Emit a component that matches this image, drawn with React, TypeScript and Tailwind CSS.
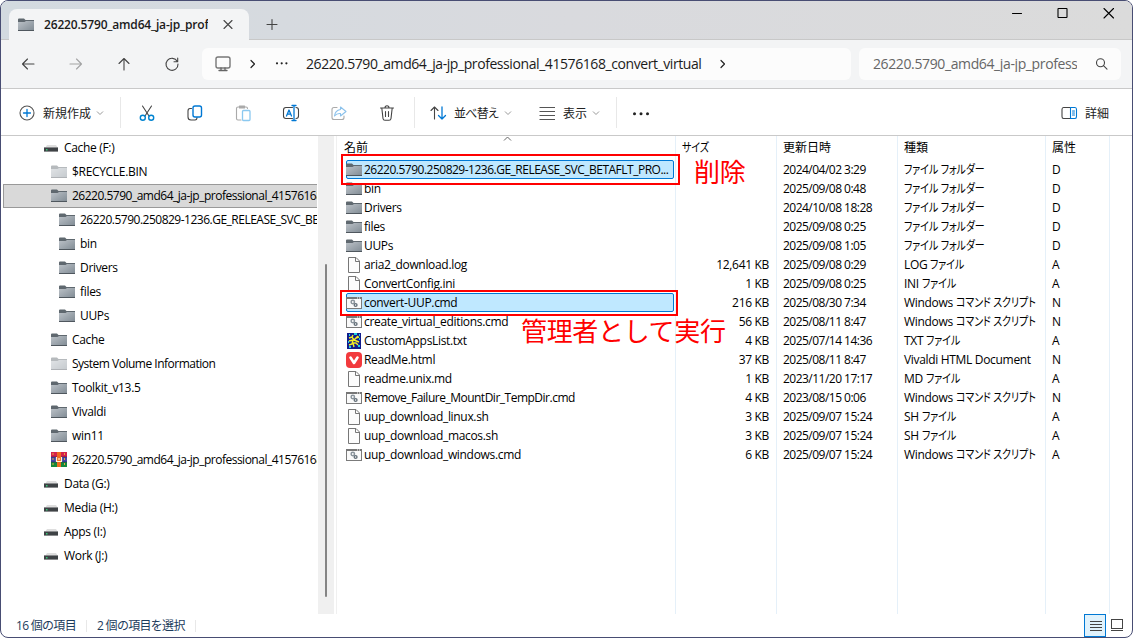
import type { ReactNode } from "react";

type FileKind = "folder" | "file" | "cmd" | "text" | "vivaldi";

type FileRow = {
  kind: FileKind;
  name: string;
  size?: string;
  date: string;
  type: string;
  kana?: string;
  attr: string;
  selected?: boolean;
};

type TreeItem = {
  kind: "drive" | "folder" | "hidden" | "rar";
  name: string;
  level: 0 | 1 | 2;
  selected?: boolean;
};

const TREE: TreeItem[] = [
  { kind: "drive", name: "Cache (F:)", level: 0 },
  { kind: "hidden", name: "$RECYCLE.BIN", level: 1 },
  { kind: "folder", name: "26220.5790_amd64_ja-jp_professional_41576168", level: 1, selected: true },
  { kind: "folder", name: "26220.5790.250829-1236.GE_RELEASE_SVC_BET", level: 2 },
  { kind: "folder", name: "bin", level: 2 },
  { kind: "folder", name: "Drivers", level: 2 },
  { kind: "folder", name: "files", level: 2 },
  { kind: "folder", name: "UUPs", level: 2 },
  { kind: "folder", name: "Cache", level: 1 },
  { kind: "hidden", name: "System Volume Information", level: 1 },
  { kind: "folder", name: "Toolkit_v13.5", level: 1 },
  { kind: "folder", name: "Vivaldi", level: 1 },
  { kind: "folder", name: "win11", level: 1 },
  { kind: "rar", name: "26220.5790_amd64_ja-jp_professional_41576168", level: 1 },
  { kind: "drive", name: "Data (G:)", level: 0 },
  { kind: "drive", name: "Media (H:)", level: 0 },
  { kind: "drive", name: "Apps (I:)", level: 0 },
  { kind: "drive", name: "Work (J:)", level: 0 },
];

const FOLDER = "ファイル フォルダー";
const FILE = "ファイル";
const SCRIPT = "コマンド スクリプト";

const FILES: FileRow[] = [
  { kind: "folder", name: "26220.5790.250829-1236.GE_RELEASE_SVC_BETAFLT_PRO...", date: "2024/04/02 3:29", type: "", kana: FOLDER, attr: "D", selected: true },
  { kind: "folder", name: "bin", date: "2025/09/08 0:48", type: "", kana: FOLDER, attr: "D" },
  { kind: "folder", name: "Drivers", date: "2024/10/08 18:28", type: "", kana: FOLDER, attr: "D" },
  { kind: "folder", name: "files", date: "2025/09/08 0:25", type: "", kana: FOLDER, attr: "D" },
  { kind: "folder", name: "UUPs", date: "2025/09/08 1:05", type: "", kana: FOLDER, attr: "D" },
  { kind: "file", name: "aria2_download.log", size: "12,641 KB", date: "2025/09/08 0:29", type: "LOG", kana: FILE, attr: "A" },
  { kind: "file", name: "ConvertConfig.ini", size: "1 KB", date: "2025/09/08 0:25", type: "INI", kana: FILE, attr: "A" },
  { kind: "cmd", name: "convert-UUP.cmd", size: "216 KB", date: "2025/08/30 7:34", type: "Windows", kana: SCRIPT, attr: "N", selected: true },
  { kind: "cmd", name: "create_virtual_editions.cmd", size: "56 KB", date: "2025/08/11 8:47", type: "Windows", kana: SCRIPT, attr: "N" },
  { kind: "text", name: "CustomAppsList.txt", size: "4 KB", date: "2025/07/14 14:36", type: "TXT", kana: FILE, attr: "A" },
  { kind: "vivaldi", name: "ReadMe.html", size: "37 KB", date: "2025/08/11 8:47", type: "Vivaldi HTML Document", attr: "N" },
  { kind: "file", name: "readme.unix.md", size: "1 KB", date: "2023/11/20 17:17", type: "MD", kana: FILE, attr: "A" },
  { kind: "cmd", name: "Remove_Failure_MountDir_TempDir.cmd", size: "4 KB", date: "2023/08/15 0:06", type: "Windows", kana: SCRIPT, attr: "N" },
  { kind: "file", name: "uup_download_linux.sh", size: "3 KB", date: "2025/09/07 15:24", type: "SH", kana: FILE, attr: "A" },
  { kind: "file", name: "uup_download_macos.sh", size: "3 KB", date: "2025/09/07 15:24", type: "SH", kana: FILE, attr: "A" },
  { kind: "cmd", name: "uup_download_windows.cmd", size: "6 KB", date: "2025/09/07 15:24", type: "Windows", kana: SCRIPT, attr: "A" },
];

const INDENT = ["pl-[39px]", "pl-[47px]", "pl-[55px]"];

function tracking(name: string) {
  if (name.startsWith("26220")) return "tracking-[-0.5px]";
  if (name.startsWith("Remove") || name.startsWith("System")) return "tracking-[-0.5px]";
  return "tracking-[-0.32px]";
}

function Folder({ faded = false }: { faded?: boolean }) {
  return (
    <svg width="16" height="16" viewBox="0 0 16 16" className={faded ? "shrink-0 opacity-45" : "shrink-0"}>
      <defs>
        <linearGradient id="folderBody" x1="0" y1="0" x2="1" y2="1">
          <stop offset="0" stopColor="#bcc2c8" />
          <stop offset="1" stopColor="#7f8a93" />
        </linearGradient>
      </defs>
      <path d="M0 2.5Q0 1.5 1 1.5H6L7.5 3H16V7H0Z" fill="#5f686f" />
      <path d="M0 5H6.5L8 4H16V14H0Z" fill="url(#folderBody)" />
      <path d="M0 13.5H16" stroke="#4f575e" />
    </svg>
  );
}

function Drive() {
  return (
    <svg width="16" height="16" viewBox="0 0 16 16" className="shrink-0">
      <path d="M4 5H13L15 8H2Z" fill="#dedede" />
      <rect x="1" y="7" width="14" height="5" rx=".5" fill="#3e4245" />
      <path d="M1 7.5H15M1 11.5H15" stroke="#8a8c8e" />
      <rect x="3" y="9" width="1.5" height="1.5" fill="#38c878" />
    </svg>
  );
}

function Rar() {
  return (
    <svg width="16" height="16" viewBox="0 0 16 16" className="shrink-0">
      <rect width="16" height="5" fill="#d3224b" />
      <rect y="5" width="16" height="5" fill="#4048a8" />
      <rect y="10" width="16" height="5" fill="#15883c" />
      <path d="M2 1V14M13.5 1V14" stroke="#e8a53a" strokeDasharray="2 3" />
      <path d="M0 5H16M0 10H16" stroke="#2a2350" strokeWidth=".6" />
      <rect x="6" width="4" height="15" fill="#ef6a1f" />
      <path d="M5.5 5V9.5H10.5V5M8 6V8" fill="none" stroke="#fff3d5" strokeWidth="1.2" />
    </svg>
  );
}

function FileIcon({ kind }: { kind: FileKind }) {
  if (kind === "folder") return <Folder />;
  if (kind === "file") {
    return (
      <svg width="16" height="16" viewBox="0 0 16 16" className="shrink-0">
        <path d="M2.5.5H10L13.5 4V15.5H2.5Z" fill="#fcfcfc" stroke="#777" />
        <path d="M9.5.5V4.5H13.5" fill="none" stroke="#777" />
      </svg>
    );
  }
  if (kind === "cmd") {
    return (
      <svg width="16" height="16" viewBox="0 0 16 16" className="shrink-0">
        <rect x=".5" y="2.5" width="15" height="11" fill="#fafafa" stroke="#7b7b7b" />
        <path d="M0 3H16" stroke="#777" strokeWidth="2" />
        <path d="M11 3h1M13 3h1" stroke="#fff" />
        <circle cx="6.8" cy="7" r="1.7" fill="none" stroke="#8a949c" strokeWidth="1.5" />
        <circle cx="9.6" cy="10" r="1.4" fill="none" stroke="#65717a" strokeWidth="1.4" />
      </svg>
    );
  }
  if (kind === "text") {
    return (
      <svg width="16" height="16" viewBox="0 0 16 16" className="shrink-0">
        <rect x="1" width="14" height="16" fill="#111c8c" />
        <path d="M3 2h1M8 1h3M13 2h1M2 9h1M13 6h1M12 13h2M3 14h2" stroke="#21cfe0" strokeWidth="2" />
        <path d="M3 5L6 4L8 7L12 3M3 8L7 7L6 11L3 12M8 7L13 9M7 10L10 10L12 12M7 10L8 14M7 2L6 4M10 5L13 4" fill="none" stroke="#f5ee24" strokeWidth="1.4" />
      </svg>
    );
  }
  return (
    <svg width="16" height="16" viewBox="0 0 16 16" className="shrink-0">
      <rect width="16" height="16" rx="4" fill="#f23a3d" />
      <path d="M4.5 5.5L8 11L11.5 5.5" fill="none" stroke="#fff" strokeWidth="2.6" strokeLinecap="round" strokeLinejoin="round" />
    </svg>
  );
}

// 20px line icon shared by the navigation and command bars
function Line({ children, className = "" }: { children: ReactNode; className?: string }) {
  return (
    <svg width="20" height="20" viewBox="0 0 20 20" fill="none" stroke="#444" strokeWidth="1.1" strokeLinecap="round" strokeLinejoin="round" className={`shrink-0 ${className}`}>
      {children}
    </svg>
  );
}

function Chevron() {
  return (
    <svg width="8" height="8" viewBox="0 0 8 8" fill="none" stroke="#999" className="shrink-0">
      <path d="M1 2.5L4 5.5L7 2.5" />
    </svg>
  );
}

// katakana in the UI face is narrower than full width
function Kana({ children }: { children: ReactNode }) {
  return (
    <span className="inline-block origin-left scale-x-[0.83] tracking-[-0.1px] [font-feature-settings:'palt']">{children}</span>
  );
}

function TitleBar() {
  return (
    <div className="flex h-[39px] shrink-0 border-b border-[#c8c8c8] bg-linear-to-r from-[#d3dae0] via-[#d9dade] to-[#dbdbdb]">
      <div className="ml-2 mt-2 -mb-px flex h-[31px] w-[240px] items-center rounded-t-lg bg-[#f3f4f5] pl-[9px]">
        <Folder />
        <div className="ml-[10px] w-[164px] overflow-hidden whitespace-nowrap text-[12px] font-semibold tracking-[-0.17px] text-[#1b1b1b]">
          26220.5790_amd64_ja-jp_profe
        </div>
        <Line className="ml-[10px]"><path d="M6 5.5L14 13.5M14 5.5L6 13.5" /></Line>
      </div>
      <Line className="ml-[13px] mt-[13px]"><path d="M5 10.5H15M10 5.5V15.5" /></Line>
      <div className="ml-auto flex h-6 items-center gap-[26px] pr-[13px]">
        <Line><path d="M5.5 10.5H14.5" stroke="#000" /></Line>
        <Line><rect x="5" y="5.5" width="9" height="9" rx=".5" stroke="#000" /></Line>
        <Line><path d="M5 5.5L14.5 15M14.5 5.5L5 15" stroke="#000" /></Line>
      </div>
    </div>
  );
}

function NavBar() {
  return (
    <div className="flex h-[49px] shrink-0 items-center border-b border-[#c9c9c9] bg-[#f3f4f5]">
      <div className="flex w-[201px] gap-7 pl-[17px]">
        <Line><path d="M16 10H4.5M9.5 5L4.5 10L9.5 15" /></Line>
        <Line className="opacity-45"><path d="M4 10H15.5M10.5 5L15.5 10L10.5 15" /></Line>
        <Line><path d="M10 16V4.5M5 9.5L10 4.5L15 9.5" /></Line>
        <Line><path d="M15.3 7.5A6 6 0 1 0 16 10M15.7 4V7.8H12" /></Line>
      </div>
      <div className="flex h-8 w-[649px] items-center rounded-md bg-[#fcfcfc] pl-[11px] text-[#1b1b1b]">
        <Line><rect x="3" y="3" width="14" height="11" rx="2" strokeWidth="1.4" stroke="#777" /><path d="M8 14V16.5M12 14V16.5M6 16.5H14" stroke="#666" strokeWidth="1.3" /></Line>
        <Line className="ml-[9px]"><path d="M9 6.5L12.5 10L9 13.5" stroke="#222" strokeWidth="1.2" /></Line>
        <Line className="ml-[10px]">
          <g fill="#222" stroke="none">
            <circle cx="5" cy="9.3" r="1.1" />
            <circle cx="9.7" cy="9.3" r="1.1" />
            <circle cx="14.4" cy="9.3" r="1.1" />
          </g>
        </Line>
        <span className="ml-[14px] whitespace-nowrap text-[14px] tracking-[-0.42px]">26220.5790_amd64_ja-jp_professional_41576168_convert_virtual</span>
        <Line className="ml-3"><path d="M8 6.5L11.5 10L8 13.5" stroke="#222" strokeWidth="1.2" /></Line>
      </div>
      <div className="ml-2 flex h-8 w-[262px] items-center rounded-md bg-[#fcfcfc] pl-[14px]">
        <div className="w-[204px] overflow-hidden whitespace-nowrap text-[14px] tracking-[-0.38px] text-[#666]">26220.5790_amd64_ja-jp_profess</div>
        <Line className="ml-[15px]"><circle cx="8.5" cy="8.7" r="4" /><path d="M11.5 11.7L15 15.2" /></Line>
      </div>
    </div>
  );
}

function Divider() {
  return <div className="h-[31px] w-px shrink-0 bg-[#e8e8e8]" />;
}

function CommandBar() {
  return (
    <div className="flex h-[47px] shrink-0 items-center border-b border-[#c9c9c9] bg-white pl-4 pt-px text-[12px] text-[#222]">
      <Line><circle cx="10" cy="10" r="7" stroke="#555" /><path d="M6.5 10H13.5M10 6.5V13.5" stroke="#0078d4" strokeWidth="1.3" /></Line>
      <span className="ml-[6px] w-[48px] whitespace-nowrap pt-[3px] tracking-normal">新規作成</span>
      <span className="ml-[5px]"><Chevron /></span>
      <span className="ml-4"><Divider /></span>
      <div className="flex w-[293px] items-center gap-7 pl-4">
        <Line><path d="M5.5 3L12 13M14.5 3L8 13" /><circle cx="5.8" cy="14.8" r="2.5" stroke="#0083d0" strokeWidth="1.4" /><circle cx="14.2" cy="14.8" r="2.5" stroke="#0083d0" strokeWidth="1.4" /></Line>
        <Line><path d="M6.5 5.5H5Q3 5.5 3 8V14Q3 17 6 17H10Q12 17 12 14.5" /><rect x="8" y="3" width="8.5" height="11" rx="2" stroke="#0078d4" strokeWidth="1.4" /></Line>
        <Line className="opacity-45"><path d="M8 17H5Q3.5 17 3.5 15.5V5.5Q3.5 4 5 4H13Q14.5 4 14.5 5.5M6.5 3H11.5V5H6.5Z" /><rect x="9.5" y="7.5" width="7.5" height="10" rx="1" stroke="#0088e0" strokeWidth="1.3" /></Line>
        <Line><path d="M11.5 4.5H5Q2.5 4.5 2.5 7V13Q2.5 15.5 5 15.5H11.5M15 4.5Q17.5 4.5 17.5 7V13Q17.5 15.5 15 15.5" /><path d="M5.5 13L8 7L10.5 13M6.4 11.2H9.6M13 2.5V17.5M11 2.5H15M11 17.5H15" stroke="#0078d4" strokeWidth="1.3" /></Line>
        <Line className="opacity-45"><path d="M8 4.5H5Q3 4.5 3 6.5V14.5Q3 16.5 5 16.5H13Q15 16.5 15 14.5V13" /><path d="M11.5 4L17 8.5L11.5 13V10.5Q8 10 5.5 13Q6 7.5 11.5 6.5Z" stroke="#0078d4" /></Line>
        <Line><path d="M3.5 5H16.5M8 5Q8 2.8 10 2.8T12 5M4.8 5L6 15.5Q6.2 17.2 8 17.2H12Q13.8 17.2 14 15.5L15.2 5M8.5 8.5V13.5M11.5 8.5V13.5" /></Line>
      </div>
      <Divider />
      <Line className="ml-[14px]"><path d="M5.5 16V4M2 7.5L5.5 4L9 7.5" /><path d="M13 4V16M9.5 12.5L13 16L16.5 12.5" stroke="#0078d4" strokeWidth="1.3" /></Line>
      <span className="ml-[5px] w-[43px] whitespace-nowrap pt-[3px] tracking-[-0.8px] [font-feature-settings:'palt']">並べ替え</span>
      <span className="ml-[7px]"><Chevron /></span>
      <Line className="ml-[25px]"><path d="M2.5 4.5H18M2.5 8.5H18M2.5 12.5H18M2.5 16.5H18" stroke="#555" strokeLinecap="butt" strokeWidth="1" /></Line>
      <span className="ml-[6px] w-6 whitespace-nowrap pt-[3px] tracking-normal">表示</span>
      <span className="ml-[5px]"><Chevron /></span>
      <span className="ml-4"><Divider /></span>
      <Line className="ml-[14px]">
        <g fill="#222" stroke="none">
          <circle cx="3.5" cy="10.8" r="1.5" />
          <circle cx="10" cy="10.8" r="1.5" />
          <circle cx="16.5" cy="10.8" r="1.5" />
        </g>
      </Line>
      <Line className="ml-auto"><path d="M11 4.5H4.5Q3 4.5 3 6.5V13.5Q3 15.5 4.5 15.5H11" /><path d="M11.5 4.5H16Q17.5 4.5 17.5 6.5V13.5Q17.5 15.5 16 15.5H11.5ZM13.5 8H15.5M13.5 10H15.5M13.5 12H15.5" stroke="#0078d4" /></Line>
      <span className="ml-[6px] mr-[23px] w-6 whitespace-nowrap pt-[3px] tracking-normal">詳細</span>
    </div>
  );
}

function Tree() {
  return (
    <div className="w-[316px] shrink-0 overflow-hidden pl-[2px]">
      {TREE.map((item) => (
        <div
          key={`${item.kind}-${item.name}-${item.level}`}
          className={`flex h-6 w-[400px] items-center whitespace-nowrap border ${INDENT[item.level]} ${
            item.selected ? "border-[#999] bg-[#d9d9d9]" : "border-transparent"
          }`}
        >
          {item.kind === "drive" && <Drive />}
          {item.kind === "folder" && <Folder />}
          {item.kind === "hidden" && <Folder faded />}
          {item.kind === "rar" && <Rar />}
          <span className={`ml-[5px] ${tracking(item.name)}`}>{item.name}</span>
        </div>
      ))}
    </div>
  );
}

const GRID = "grid grid-cols-[339px_101px_121px_148px_64px]";

function FileList() {
  return (
    <div className="relative flex-1">
      {/* column lines */}
      <div className={`absolute inset-0 ${GRID}`}>
        {[0, 1, 2, 3, 4].map((n) => (
          <div key={n} className="border-r border-[#e5f0f9]" />
        ))}
      </div>
      <svg width="9" height="6" viewBox="0 0 9 6" fill="none" stroke="#666" className="absolute left-[166px] top-0">
        <path d="M1 4.5L4.5 1L8 4.5" />
      </svg>

      <div className={`relative h-6 items-center whitespace-nowrap tracking-normal ${GRID}`}>
        <span className="pl-[7px]">名前</span>
        <span className="pl-[6px]"><Kana>サイズ</Kana></span>
        <span className="pl-[6px]">更新日時</span>
        <span className="pl-[6px]">種類</span>
        <span className="pl-[6px]">属性</span>
      </div>
      {FILES.map((f) => (
        <div key={f.name} className={`relative h-[19px] items-center whitespace-nowrap ${GRID}`}>
          <div
            className={`ml-[9px] mr-[2px] flex h-[19px] items-center rounded-xs border ${
              f.selected ? "border-[#0078d4] bg-[#bfe8ff]" : "border-transparent"
            }`}
          >
            <span className="-ml-px"><FileIcon kind={f.kind} /></span>
            <span className={`ml-[2px] ${tracking(f.name)}`}>{f.name}</span>
          </div>
          <span className="pr-[8px] text-right">{f.size}</span>
          <span className="pl-[6px] tracking-[-0.52px]">{f.date}</span>
          <span className="flex gap-[3px] pl-[6px]">
            {f.type && <span>{f.type}</span>}
            {f.kana && <Kana>{f.kana}</Kana>}
          </span>
          <span className="pl-[6px]">{f.attr}</span>
        </div>
      ))}

      {/* callouts drawn over the list */}
      <div className="absolute left-1 top-[18px] h-[31px] w-[339px] border-2 border-[#ff0000]" />
      <div className="absolute left-[357px] top-[18px] text-[26px] leading-9 text-[#ff0000]">削除</div>
      <div className="absolute left-[3px] top-[154px] h-[26px] w-[338px] border-2 border-[#ff0000]" />
      <div className="absolute left-[184px] top-[177px] whitespace-nowrap text-[26px] leading-9 text-[#ff0000]">管理者として実行</div>
    </div>
  );
}

function StatusBar() {
  return (
    <div className="flex h-[23px] shrink-0 items-center text-[12px] tracking-[-0.7px] text-[#1d3c5c]">
      <span className="w-[76px] whitespace-nowrap pl-[15px]">16 個の項目</span>
      <div className="ml-[9px] h-3 w-px bg-[#e8e8e8]" />
      <span className="ml-[10px] w-[98px] whitespace-nowrap">2 個の項目を選択</span>
      <div className="h-3 w-px bg-[#e8e8e8]" />
      <div className="ml-auto flex h-[23px] w-[22px] items-center justify-center border border-[#0078d4] bg-[#e0f2fc]">
        <svg width="12" height="12" viewBox="0 0 12 12" stroke="#444" className="ml-[2px] mt-px"><path d="M0 1.5H12M0 4.5H12M0 7.5H12M0 10.5H12" /></svg>
      </div>
      <svg width="12" height="13" viewBox="0 0 12 13" fill="none" stroke="#444" className="ml-[5px] mr-[9px]">
        <rect x=".5" y=".5" width="11" height="9" />
        <path d="M0 11.5H12" />
      </svg>
    </div>
  );
}

export default function App() {
  return (
    <div className="flex h-[638px] w-[1133px] flex-col overflow-hidden rounded-lg border border-[#484d73] bg-white font-['Open_Sans','Noto_Sans_CJK_JP',sans-serif] text-[12px] leading-4 tracking-[-0.32px] text-black">
      <TitleBar />
      <NavBar />
      <CommandBar />
      <div className="flex min-h-0 flex-1">
        <Tree />
        <div className="ml-px flex w-4 shrink-0 justify-center bg-[#f0f0f0] pb-[17px] pt-[128px]">
          <div className="w-[2px] rounded-full bg-[#858585]" />
        </div>
        <div className="ml-[2px] w-px bg-[#f0f0f0]" />
        <FileList />
      </div>
      <StatusBar />
    </div>
  );
}
